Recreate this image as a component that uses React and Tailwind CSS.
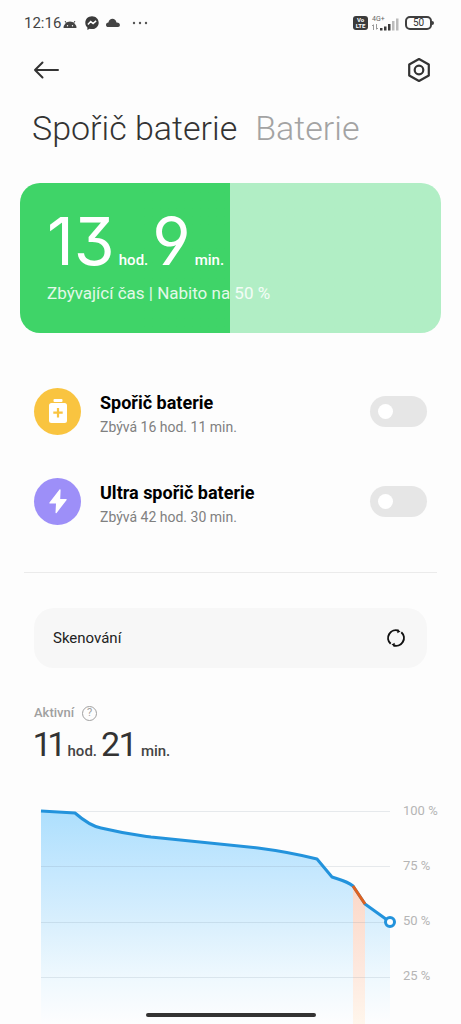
import React from "react";

const SAVERS = [
  { id: "saver", title: "Spořič baterie", note: "Zbývá 16 hod. 11 min.", kind: "battery" },
  { id: "ultra", title: "Ultra spořič baterie", note: "Zbývá 42 hod. 30 min.", kind: "bolt" },
];

const LEVELS = ["100 %", "75 %", "50 %", "25 %"];

const CURVE =
  "M0 1 L34 3 C42 10 50 16 60 18 C85 24 95 25 110 27 C150 31 190 35 217 38 C240 41 260 45 276 49 L291 67 C300 70 306 71 312 76 L324 94 L349 112";

function StatusBar() {
  return (
    <div className="flex h-[46px] shrink-0 items-center justify-between pl-6 pr-[27px] text-[#444]">
      <div className="flex items-center">
        <span className="text-[15px] leading-5">12:16</span>
        <svg className="ml-0.5 h-4 w-[14px]" viewBox="0 0 14 16" fill="none">
          <path d="M.5 13a6.500 6.500 0 0 1 13 0z" fill="#444" />
          <path d="M2 6l2 3M12 6l-2 3" stroke="#444" />
          <circle cx="4.500" cy="10.800" r=".700" fill="#fff" />
          <circle cx="9.500" cy="10.800" r=".700" fill="#fff" />
        </svg>
        <svg className="ml-[7px] h-4 w-4" viewBox="0 0 16 16">
          <path
            d="M8 1.200C4.200 1.200 1.300 4 1.300 7.700c0 2 .8 3.600 2.100 4.800v2.400l2.200-1.200c.8.300 1.500.4 2.400.4 3.800 0 6.700-2.800 6.700-6.400S11.800 1.200 8 1.200z"
            fill="#3b3b3b"
          />
          <path d="M3.900 9.500L6.700 6.600L9.100 8.500L12.100 5.900" fill="none" stroke="#fff" strokeWidth="1.500" />
        </svg>
        <svg className="ml-[5px] h-4 w-4" viewBox="0 0 16 16">
          <path
            d="M3.500 12C1.800 12 1 11 1 9.900C1 8.500 2 7.700 3.400 7.600C4 5 5.500 3.800 7.400 3.800C9.500 3.800 10.900 5.200 11.500 7.400C13.600 7.200 14.900 8.500 14.900 10C14.900 11.200 14.300 12 13 12z"
            fill="#444"
          />
        </svg>
        <svg className="ml-[11px] h-4 w-4" viewBox="0 0 16 16" fill="#555">
          <circle cx="2" cy="8" r="1.200" />
          <circle cx="8" cy="8" r="1.200" />
          <circle cx="14" cy="8" r="1.200" />
        </svg>
      </div>
      <div className="flex items-center">
        <div className="flex h-3.5 w-[15px] flex-col items-center justify-center rounded-[3px] bg-[#3b3b3b] text-[6px] font-bold leading-[6px] text-white">
          <span>Vo</span>
          <span>LTE</span>
        </div>
        <div className="ml-1 flex items-end">
          <div className="flex h-4 w-[13px] flex-col text-[7px] leading-[8px] text-[#666]">
            <span className="whitespace-nowrap">4G+</span>
            <svg className="mt-px h-1.5 w-1.5" viewBox="0 0 6 6" fill="none" stroke="#999">
              <path d="M1.500 6V1M0 2l1.500-1.500M4.500 0v5M6 4L4.500 5.500" />
            </svg>
          </div>
          <svg className="-ml-1.5 h-3.5 w-5" viewBox="0 0 20 14">
            <path d="M1 11h2.500v2.500H1zM5 9.500h2.500v4H5zM9 7h2.500v6.500H9z" fill="#3b3b3b" />
            <path d="M13 4h2.500v9.500H13zM17 1.500h2.500v12H17z" fill="#bbb" />
          </svg>
        </div>
        <div className="ml-1.5 flex h-3.5 w-[27px] items-center justify-center rounded-[5px] border-2 border-[#3f3f3f] text-[10px] leading-[10px] text-[#333]">
          50
        </div>
        <span className="h-1 w-0.5 rounded-r-sm bg-[#3f3f3f]" />
      </div>
    </div>
  );
}

function SaverIcon({ kind }) {
  if (kind === "battery") {
    return (
      <span className="flex size-[47px] shrink-0 items-center justify-center rounded-full bg-[#f9c440]">
        <svg className="size-7" viewBox="0 0 28 28">
          <rect x="9.500" y="2" width="9" height="3" rx="1" fill="#fff" />
          <rect x="5" y="6" width="18" height="20" rx="2.500" fill="#fff" />
          <path d="M14 11v9.400M9.300 15.700h9.400" stroke="#f9c440" strokeWidth="2.200" />
        </svg>
      </span>
    );
  }
  return (
    <span className="flex size-[47px] shrink-0 items-center justify-center rounded-full bg-[#9d8ff8]">
      <svg className="size-7" viewBox="0 0 28 28">
        <path
          d="M15.500 2.500L5.500 15.500C5.100 16.100 5.400 16.600 6 16.600H12L11.500 25.500C11.500 26.400 12.100 26.500 12.600 25.900L22.600 13C23 12.400 22.700 11.900 22 11.900H16.200L16.600 3C16.600 2.100 16 1.900 15.500 2.500z"
          fill="#fff"
        />
      </svg>
    </span>
  );
}

function SaverRow({ id, title, note, kind }) {
  return (
    <li className="flex items-center">
      <SaverIcon kind={kind} />
      <label htmlFor={id} className="ml-[19px] flex-1 pt-2">
        <span className="block text-[18px] font-bold leading-6 text-black">{title}</span>
        <span className="block text-[14px] leading-6 text-[#808080]">{note}</span>
      </label>
      <input
        id={id}
        type="checkbox"
        role="switch"
        className="flex h-[31px] w-[57px] shrink-0 appearance-none items-center rounded-full bg-[#e6e6e6] px-2 before:size-[15px] before:rounded-full before:bg-white checked:justify-end checked:bg-[#3fd468]"
      />
    </li>
  );
}

function Chart() {
  return (
    <div className="mt-[46px] flex pl-[41px] pr-6">
      <div className="relative h-[214px] flex-1">
        <svg className="block h-full w-full overflow-visible" viewBox="0 0 349 214" preserveAspectRatio="none" fill="none">
          <defs>
            <linearGradient id="fill" x1="0" y1="0" x2="0" y2="214" gradientUnits="userSpaceOnUse">
              <stop offset="0" stopColor="#addffd" />
              <stop offset=".3" stopColor="#c6e8fe" />
              <stop offset=".55" stopColor="#dbf0fd" />
              <stop offset=".8" stopColor="#f0f9fe" />
              <stop offset="1" stopColor="#fdfdfe" />
            </linearGradient>
            <linearGradient id="drain" x1="0" y1="76" x2="0" y2="214" gradientUnits="userSpaceOnUse">
              <stop offset="0" stopColor="#fbd8c8" />
              <stop offset=".6" stopColor="#fde8de" />
              <stop offset="1" stopColor="#fff6ec" />
            </linearGradient>
          </defs>
          <path d={CURVE + " V214 H0 Z"} fill="url(#fill)" />
          <path d="M312 76L324 94V214H312z" fill="url(#drain)" />
          <path
            d="M0 1.500H349M0 56.500H349M0 112.500H349M0 167.500H349"
            stroke="#64788c"
            strokeOpacity=".150"
            vectorEffect="non-scaling-stroke"
          />
          <path d={CURVE} stroke="#2393dc" strokeWidth="3" strokeLinejoin="round" vectorEffect="non-scaling-stroke" />
          <path d="M312 76L324 94" stroke="#e0611f" strokeWidth="3" vectorEffect="non-scaling-stroke" />
        </svg>
        <span className="absolute -right-[6px] top-[106px] size-3 rounded-full border-3 border-[#2393dc] bg-white" />
      </div>
      <ul className="-mt-[7px] ml-[13px] h-[221px] w-[34px] whitespace-nowrap text-[13px] leading-4 text-[#b5b5b5]">
        {LEVELS.map((level) => (
          <li key={level} className="h-[55px]">{level}</li>
        ))}
      </ul>
    </div>
  );
}

export default function App() {
  return (
    <div className="flex min-h-screen flex-col bg-[#fdfdfd] font-['Roboto',sans-serif]">
      <StatusBar />
      <header className="flex h-12 shrink-0 items-center justify-between pl-[33px] pr-[29px]">
        <button type="button" aria-label="Zpět">
          <svg className="h-6 w-[27px]" viewBox="0 0 27 24" fill="none" stroke="#333" strokeWidth="2" strokeLinecap="round" strokeLinejoin="round">
            <path d="M25 12H2M9.500 4.500L2 12L9.500 19.500" />
          </svg>
        </button>
        <button type="button" aria-label="Nastavení">
          <svg className="size-[26px]" viewBox="0 0 26 26" fill="none" stroke="#333" strokeWidth="2.200" strokeLinejoin="round">
            <path d="M13 2L22.800 7.500V18.500L13 24L3.200 18.500V7.500z" />
            <circle cx="13" cy="13" r="4.300" />
          </svg>
        </button>
      </header>
      <nav className="mt-2.5 flex gap-[18px] px-8 text-[34px] font-light leading-[48px]">
        <a href="#saver" className="text-[#333]">Spořič baterie</a>
        <a href="#battery" className="text-[#a3a3a3]">Baterie</a>
      </nav>

      <main>
        <section className="mx-5 mt-[31px] rounded-[20px] bg-linear-to-r from-[#3fd468] from-50% to-[#b1eec5] to-50% px-[27px] pb-7 pt-[34px] text-white">
          <p className="flex items-baseline text-[15px] font-medium leading-6">
            <span className="font-['Inter',sans-serif] text-[66px] font-normal leading-[48px] [font-feature-settings:'cv09','cv04']">13</span>
            <span className="ml-1">hod.</span>
            <span className="ml-1 font-['Inter',sans-serif] text-[66px] font-normal leading-[48px] [font-feature-settings:'cv09','cv04']">9</span>
            <span className="ml-1">min.</span>
          </p>
          <p className="mt-[9px] text-[17px] leading-6 text-white/85">Zbývající čas | Nabito na 50 %</p>
        </section>

        <ul className="mt-[50px] flex flex-col gap-[34px] px-[34px]">
          {SAVERS.map((saver) => (
            <SaverRow key={saver.id} {...saver} />
          ))}
        </ul>

        <hr className="mx-6 mt-[43px] border-[#ebebeb]" />

        <button
          type="button"
          className="mx-[34px] mt-[35px] flex h-[60px] w-[calc(100%-68px)] items-center justify-between rounded-[20px] bg-[#f7f7f7] pl-[19px] pr-[21px] text-[15px] text-[#222]"
        >
          Skenování
          <svg className="size-5" viewBox="0 0 20 20" fill="none" stroke="#111" strokeWidth="2">
            <path d="M4.700 15.800A7.800 7.800 0 0 1 12.700 2.700" />
            <path d="M15.300 4.200A7.800 7.800 0 0 1 7.300 17.300" />
            <path d="M11.500 1.500l3 2-3.200 1.700zM8.500 18.500l-3-2 3.200-1.700z" fill="#111" stroke="none" />
          </svg>
        </button>

        <section>
          <div className="mt-9 flex items-center gap-2 px-[34px]">
            <h2 className="text-[13px] font-medium leading-[18px] text-[#a0a0a0]">Aktivní</h2>
            <button
              type="button"
              aria-label="Nápověda"
              className="flex size-[15px] items-center justify-center rounded-full border border-[#a0a0a0] text-[11px] leading-3 text-[#a0a0a0]"
            >
              ?
            </button>
          </div>
          <p className="mt-0.5 flex items-baseline px-[34px] text-[15px] font-medium leading-6 text-[#444]">
            <span className="text-[34px] font-normal leading-10 text-[#333] [font-feature-settings:'pnum']">11</span>
            <span className="ml-1">hod.</span>
            <span className="ml-1 text-[34px] font-normal leading-10 text-[#333] [font-feature-settings:'pnum']">21</span>
            <span className="ml-1.5">min.</span>
          </p>
          <Chart />
        </section>
      </main>
      <div className="fixed bottom-[7px] left-1/2 h-1 w-[170px] -translate-x-1/2 rounded-full bg-[#333]" />
    </div>
  );
}
